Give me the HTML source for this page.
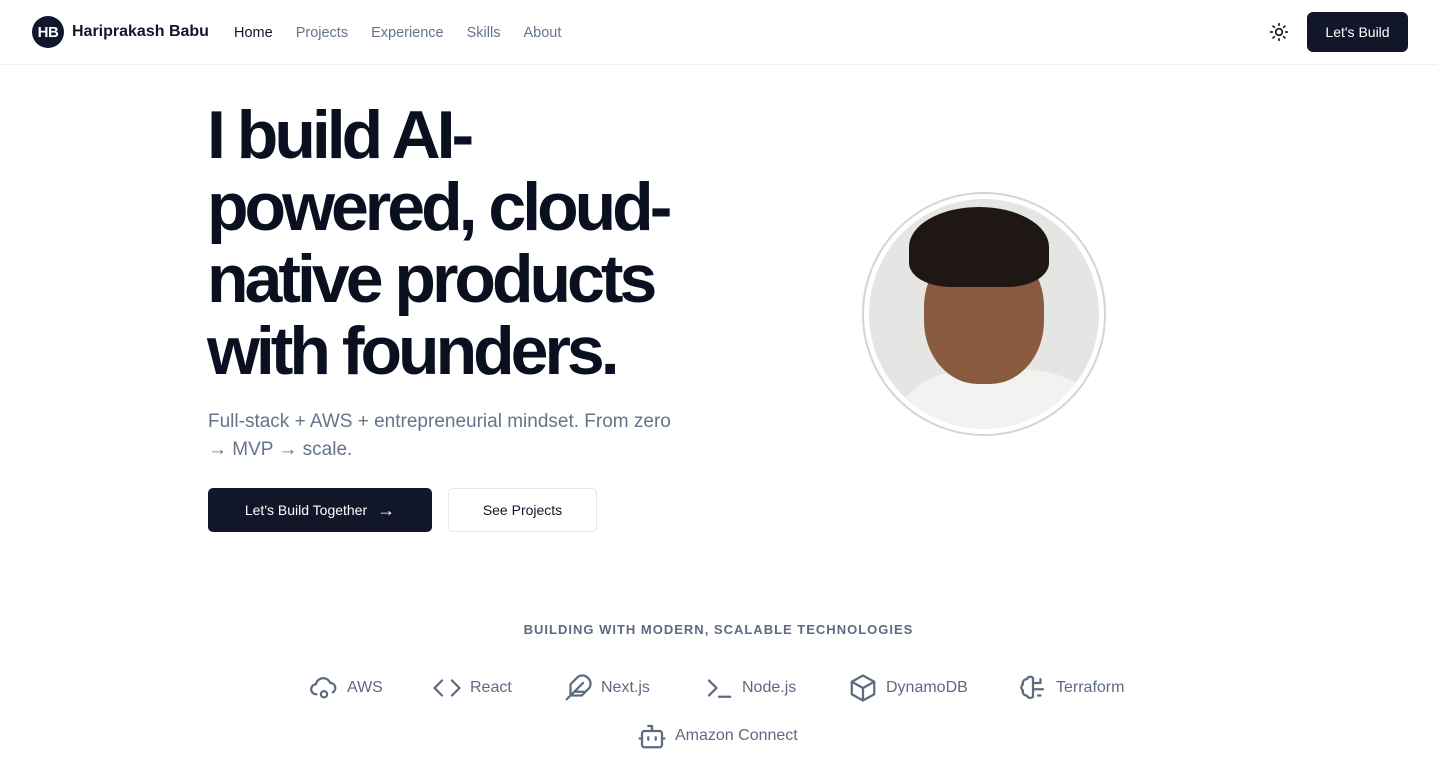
<!DOCTYPE html>
<html><head><meta charset="utf-8"><style>
*{box-sizing:border-box;margin:0;padding:0}
body{width:1437px;height:779px;overflow:hidden;background:#fff;font-family:"Liberation Sans",sans-serif;color:#0f172a;position:relative}
.nav{position:absolute;top:0;left:0;right:0;height:65px;border-bottom:1px solid #eef1f5}
.logo{position:absolute;left:32px;top:16px;width:32px;height:32px;border-radius:50%;background:#0f172a;color:#fff;font-weight:700;font-size:15px;display:flex;align-items:center;justify-content:center;letter-spacing:-0.5px}
.brand{position:absolute;left:72px;top:23px;font-weight:700;font-size:16px}
.links{position:absolute;left:234px;top:25px;font-size:14.5px;color:#64748b}
.links span{margin-right:23px}
.cta{position:absolute;right:29px;top:12px;width:101px;height:40px;background:#111629;color:#fff;border-radius:6px;font-size:14px;display:flex;align-items:center;justify-content:center}
h1{position:absolute;left:207px;top:99px;font-size:68px;line-height:72px;font-weight:800;letter-spacing:-4px;white-space:nowrap;color:#0b1020}
.sub{position:absolute;left:208px;top:408px;font-size:19px;line-height:28px;color:#64748b;width:475px}
.b1{position:absolute;left:208px;top:488px;width:224px;height:44px;background:#111629;color:#fff;border-radius:5px;font-size:14px;display:flex;align-items:center;justify-content:center;gap:10px}
.b2{position:absolute;left:448px;top:488px;width:149px;height:44px;border:1px solid #e2e8f0;border-radius:5px;font-size:14px;display:flex;align-items:center;justify-content:center}
.photo{position:absolute;left:862px;top:192px;width:244px;height:244px;border-radius:50%;border:2px solid #d4d4d8;padding:5px}
.photo .in{width:100%;height:100%;border-radius:50%;overflow:hidden;background:#e5e5e3;position:relative}
.tag{position:absolute;top:622px;left:0;right:0;text-align:center;font-size:13px;letter-spacing:1px;color:#5c6b82;font-weight:600}
.tech{position:absolute;display:flex;align-items:center;gap:8px;font-size:16px;color:#5c6b82}
.tech svg{width:30px;height:30px;fill:none;stroke:#5c6b82;stroke-width:1.8;stroke-linecap:round;stroke-linejoin:round}
</style></head><body>
<div class="nav">
<div class="logo">HB</div><div class="brand">Hariprakash Babu</div>
<div class="links"><span style="color:#0f172a">Home</span><span>Projects</span><span>Experience</span><span>Skills</span><span>About</span></div>
<svg style="position:absolute;left:1269px;top:22px" width="20" height="20" viewBox="0 0 24 24" fill="none" stroke="#0f172a" stroke-width="2" stroke-linecap="round"><circle cx="12" cy="12" r="4"/><path d="M12 2v2M12 20v2M4.9 4.9l1.4 1.4M17.7 17.7l1.4 1.4M2 12h2M20 12h2M4.9 19.1l1.4-1.4M17.7 6.3l1.4-1.4"/></svg>
<div class="cta">Let's Build</div>
</div>
<h1>I build AI-<br>powered, cloud-<br>native products<br>with founders.</h1>
<div class="sub">Full-stack + AWS + entrepreneurial mindset. From zero<br>→ MVP → scale.</div>
<div class="b1">Let's Build Together <span style="font-size:18px">→</span></div>
<div class="b2">See Projects</div>
<div class="photo"><div class="in">
<div style="position:absolute;left:30px;top:170px;width:200px;height:120px;background:#f2f2f0;border-radius:40%"></div>
<div style="position:absolute;left:55px;top:45px;width:120px;height:140px;background:#8a5a3e;border-radius:45%"></div>
<div style="position:absolute;left:40px;top:8px;width:140px;height:80px;background:#1e1714;border-radius:50% 50% 30% 30%"></div>
</div></div>
<div class="tag">BUILDING WITH MODERN, SCALABLE TECHNOLOGIES</div>
<div class="tech" style="left:309px;top:673px"><svg viewBox="0 0 24 24"><path d="M6 17a4 4 0 0 1-.5-8A6 6 0 0 1 17 8a4 4 0 0 1 2 7.5"/><circle cx="12" cy="17" r="2.5"/></svg>AWS</div>
<div class="tech" style="left:432px;top:673px"><svg viewBox="0 0 24 24"><path d="M8 6l-6 6 6 6M16 6l6 6-6 6"/></svg>React</div>
<div class="tech" style="left:563px;top:673px"><svg viewBox="0 0 24 24"><path d="M20 4a6 6 0 0 0-9 0l-5 5v9h9l5-5a6 6 0 0 0 0-9zM16 8L3 21M17 15H9"/></svg>Next.js</div>
<div class="tech" style="left:704px;top:673px"><svg viewBox="0 0 24 24"><path d="M4 6l6 6-6 6M12 19h9"/></svg>Node.js</div>
<div class="tech" style="left:848px;top:673px"><svg viewBox="0 0 24 24"><path d="M12 2l9 5v10l-9 5-9-5V7zM3 7l9 5 9-5M12 12v10"/></svg>DynamoDB</div>
<div class="tech" style="left:1018px;top:673px"><svg viewBox="0 0 24 24"><path d="M12 4a3 3 0 0 0-5 1 3 3 0 0 0-3 4 3 3 0 0 0 0 5 3 3 0 0 0 3 4 3 3 0 0 0 5 1zM12 8h6M12 13h8M16 18h2M18 8V5"/></svg>Terraform</div>
<div class="tech" style="left:637px;top:721px"><svg viewBox="0 0 24 24"><rect x="4" y="8" width="16" height="13" rx="2"/><path d="M12 8V4h-3M2 14h2M20 14h2M9 13v2M15 13v2"/></svg>Amazon Connect</div>
</body></html>
